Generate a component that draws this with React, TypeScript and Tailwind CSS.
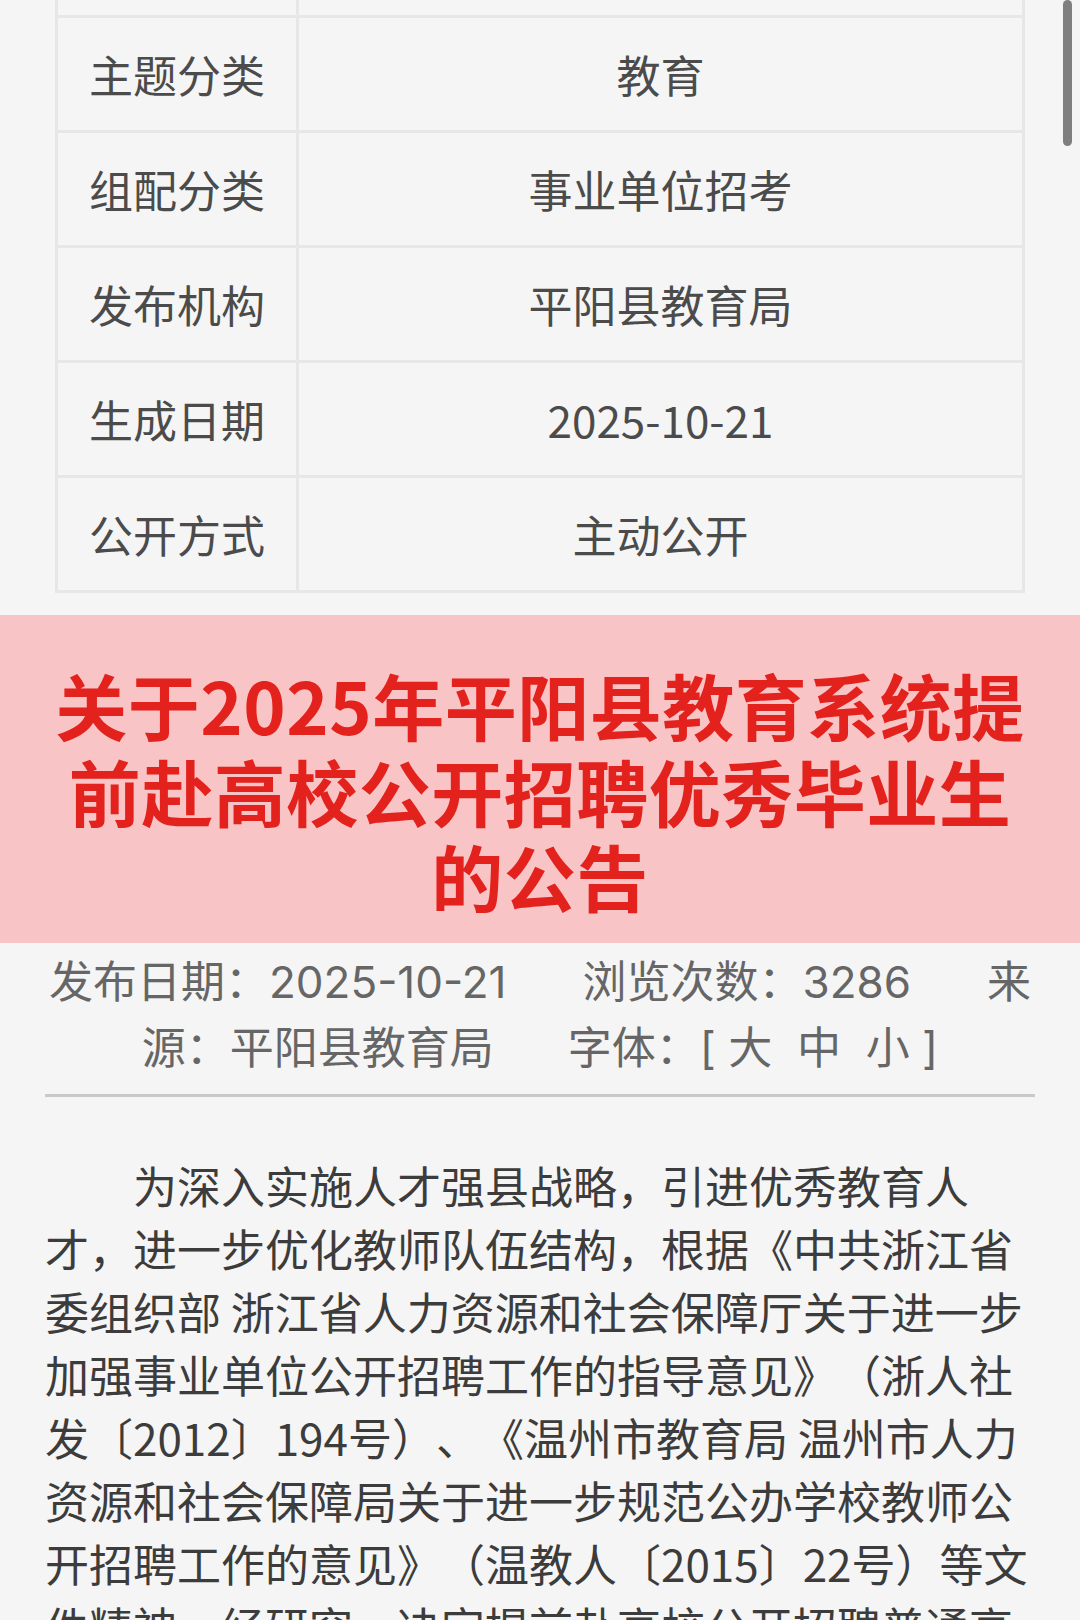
import React from 'react';

const rows: { label: string; value: string }[] = [
  { label: '主题分类', value: '教育' },
  { label: '组配分类', value: '事业单位招考' },
  { label: '发布机构', value: '平阳县教育局' },
  { label: '生成日期', value: '2025-10-21' },
  { label: '公开方式', value: '主动公开' },
];

const cjk = { fontFamily: '"Noto Sans CJK SC", "Noto Sans", sans-serif' };
const meta = { fontFamily: 'Inter, "Noto Sans CJK SC", sans-serif' };

function InfoTable() {
  return (
    <div className="mx-[55px] border-x-[3px] border-b-[3px] border-[#e7e7e7]" style={cjk}>
      {/* row scrolled off the top */}
      <div className="flex h-[18px] border-b-[3px] border-[#e7e7e7]">
        <div className="w-[241px] border-r-[3px] border-[#e7e7e7]" />
        <div className="flex-1" />
      </div>
      {rows.map((row, i) => (
        <div
          key={row.label}
          className={`flex ${i < rows.length - 1 ? 'h-[115px] border-b-[3px] border-[#e7e7e7]' : 'h-[112px]'}`}
        >
          <div className="flex w-[241px] items-center border-r-[3px] border-[#e7e7e7] pl-[31px] text-[44px] text-[#4b4b4b]">
            {row.label}
          </div>
          <div className="flex flex-1 items-center justify-center text-[44px] text-[#4b4b4b]">
            {row.value}
          </div>
        </div>
      ))}
    </div>
  );
}

export default function App() {
  return (
    <div className="relative min-h-[1620px] overflow-hidden bg-[#f5f5f5] pb-10 [text-spacing-trim:space-all]">
      <div className="absolute right-[8px] top-0 h-[146px] w-[9px] rounded-full bg-[#7f7f7f]" />

      <InfoTable />

      <div className="mt-[22px] bg-[#f9c4c5] px-[20px] pb-[25px] pt-[46px] text-center" style={cjk}>
        <h1 className="text-[72px] font-bold leading-[85.5px] tracking-[0.5px] text-[#e3221d]">
          关于2025年平阳县教育系统提
          <br />
          前赴高校公开招聘优秀毕业生
          <br />
          的公告
        </h1>
      </div>

      <div className="mx-[45px]">
        <div className="pt-[6px] text-center text-[44px] leading-[66px] text-[#666666]" style={meta}>
          <span>发布日期：2025-10-21</span>
          <span className="inline-block w-[76px]" />
          <span>浏览次数：3286</span>
          <span className="inline-block w-[76px]" />
          <span>来</span>
          <br />
          <span>源：平阳县教育局</span>
          <span className="inline-block w-[74px]" />
          <span>字体：[&nbsp;大&nbsp;&nbsp;中&nbsp;&nbsp;小&nbsp;]</span>
        </div>

        <div className="mt-[13px] h-[3px] bg-[#c9c9c9]" />

        <p
          className="mt-[57px] indent-[2em] text-[44px] leading-[63px] text-[#3c3c3c]"
          style={cjk}
        >
          为深入实施人才强县战略，引进优秀教育人才，进一步优化教师队伍结构，根据《中共浙江省委组织部 浙江省人力资源和社会保障厅关于进一步加强事业单位公开招聘工作的指导意见》（浙人社发〔2012〕194号）、《温州市教育局 温州市人力资源和社会保障局关于进一步规范公办学校教师公开招聘工作的意见》（温教人〔2015〕22号）等文件精神，经研究，决定提前赴高校公开招聘普通高校优秀毕业生，现将有关事项公告如下：
        </p>
      </div>
    </div>
  );
}
